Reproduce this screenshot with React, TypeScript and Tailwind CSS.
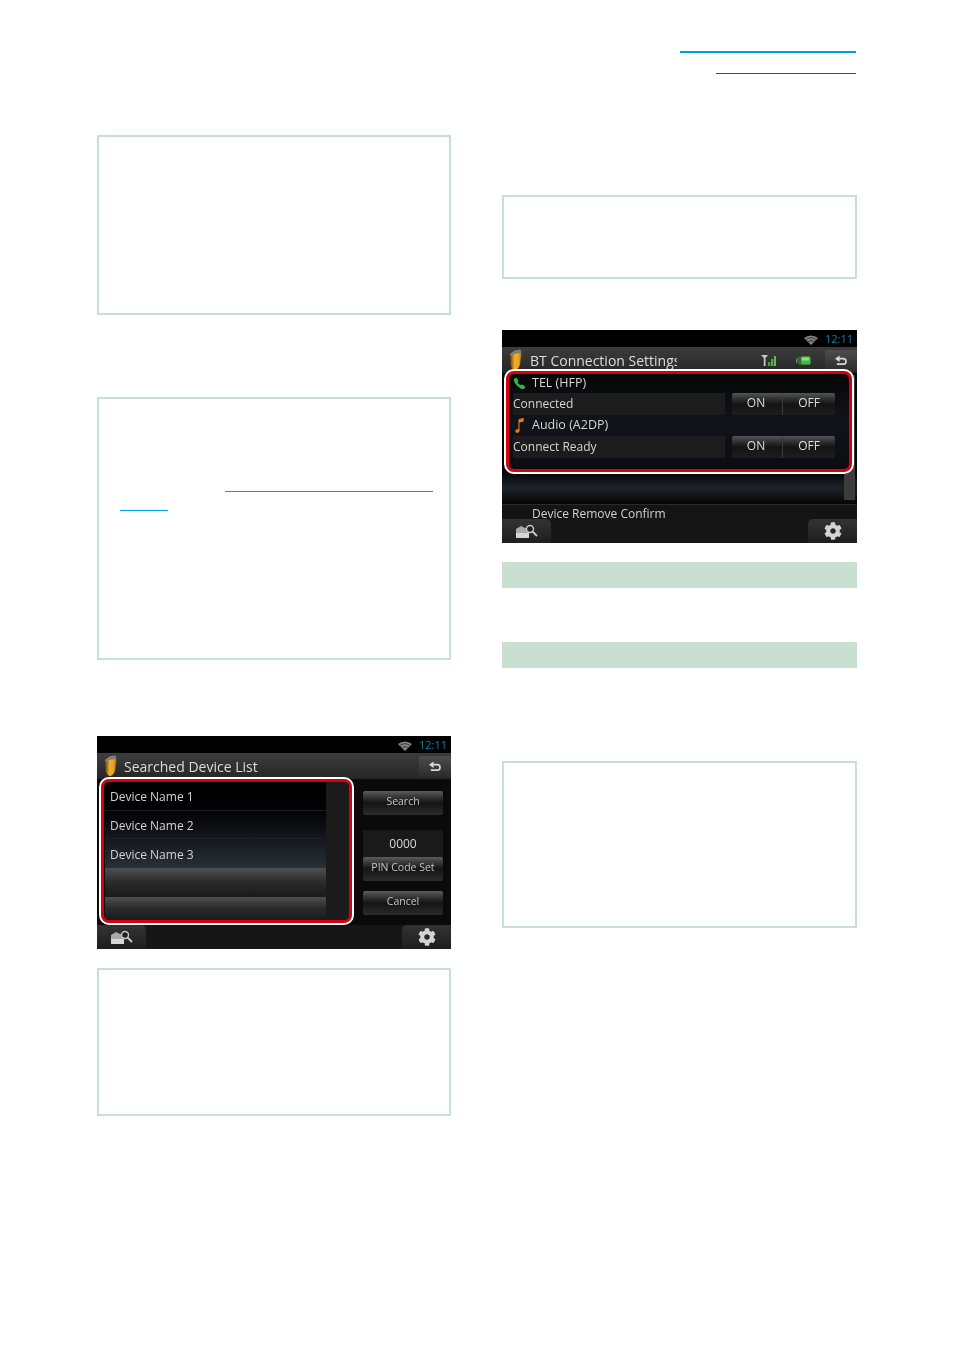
import { ReactNode } from "react";
import { FaCog } from "react-icons/fa";
import { IoCall, IoMusicalNote } from "react-icons/io5";

const screenFont = "font-['Open_Sans','Noto_Sans',sans-serif]";

function Wifi() {
  return (
    <svg width="14" height="10" viewBox="0 0 14 10" className="opacity-80">
      <path d="M0 3 Q7 -2 14 3 L7 10 Z" fill="#a8a8a8" />
      <path d="M2.2 4.4 Q7 1 11.8 4.4" stroke="#222" strokeWidth="0.8" fill="none" />
      <path d="M4.3 6.5 Q7 4.6 9.7 6.5" stroke="#222" strokeWidth="0.8" fill="none" />
    </svg>
  );
}

function Flame({ id }: { id: string }) {
  return (
    <svg width="15" height="22" viewBox="0 0 15 22">
      <defs>
        <linearGradient id={id} x1="0" y1="0" x2="1" y2="0">
          <stop offset="0" stopColor="#5e3f0c" />
          <stop offset="0.4" stopColor="#f0ae26" />
          <stop offset="0.75" stopColor="#e8a322" />
          <stop offset="1" stopColor="#9a6a14" />
        </linearGradient>
      </defs>
      <path d="M2 5 Q8 0 13 1 Q13 3 13.5 5 L12 16 Q10 21 6.5 21 Q3 20 2.5 15 Z" fill={`url(#${id})`} />
      <path d="M2 5 Q8 0 13 1 Q13 3 13 4.5 Q7 3.5 2.5 7 Z" fill="#7d7d7d" />
    </svg>
  );
}

function BackArrow() {
  return (
    <svg width="13" height="11" viewBox="0 0 14 12" fill="none">
      <path d="M5 4 H10 Q13 4 13 7 Q13 10 10 10 H3" stroke="#d8d8d8" strokeWidth="1.8" />
      <path d="M1 4 L6 0.5 V7.5 Z" fill="#d8d8d8" />
    </svg>
  );
}

function FolderSearch() {
  return (
    <svg width="24" height="16" viewBox="0 0 24 16">
      <path d="M1 6 L6 3 L10 5 H14 V15 H1 Z" fill="#a9a9a9" />
      <path d="M1 10 H14 V15 H1 Z" fill="#d6d6d6" />
      <circle cx="15" cy="6" r="3.5" fill="#222" stroke="#c8c8c8" strokeWidth="1.4" />
      <path d="M17.5 8.5 L22 13" stroke="#c8c8c8" strokeWidth="1.8" />
    </svg>
  );
}

function Signal() {
  return (
    <svg width="15" height="12" viewBox="0 0 15 12">
      <path d="M0 1 H7 L4.5 4 V12 H2.8 V4 Z" fill="#c9c9c9" />
      <rect x="7" y="8" width="2.4" height="4" fill="#3f9f3a" />
      <rect x="10" y="5" width="2.4" height="7" fill="#4aaa40" />
      <rect x="13" y="2" width="2" height="10" fill="#5dbb4c" />
    </svg>
  );
}

function Battery() {
  return (
    <svg width="15" height="9" viewBox="0 0 15 9">
      <rect x="0" y="2.5" width="1.5" height="4" fill="#6f8f6a" />
      <rect x="1.5" y="0.5" width="13" height="8" rx="1.5" fill="#2f6b33" />
      <rect x="5" y="0.5" width="9.5" height="8" rx="1.5" fill="#4bb24a" />
      <rect x="6" y="1.5" width="7" height="3" fill="#8fdc86" />
    </svg>
  );
}

function Label({ children, className = "" }: { children: ReactNode; className?: string }) {
  return <span className={`blur-[0.4px] whitespace-nowrap ${className}`}>{children}</span>;
}

function ScreenTop({ title, titleClass, flameId, extras }: { title: string; titleClass: string; flameId: string; extras?: ReactNode }) {
  return (
    <>
      <div className="h-[17px] bg-black flex items-center justify-end gap-[7px] pr-[4px] pt-[2px]">
        <Wifi />
        <Label className="text-[11px] text-[#1d7f9f]">12:11</Label>
      </div>
      <div className="h-[26px] bg-gradient-to-b from-[#3d3d3d] to-[#262626] flex items-center pl-[6px]">
        <Flame id={flameId} />
        <div className={`pt-[1px] overflow-hidden ${titleClass}`}>
          <Label className="text-[14px] text-[#dcdcdc] block">{title}</Label>
        </div>
        <div className="ml-auto flex items-center h-full">
          {extras}
          <div className="w-[32px] h-[21px] self-start mt-[3px] pr-[2px] bg-gradient-to-b from-[#4d4d4d] to-[#2c2c2c] rounded-t-[2px] flex items-center justify-center">
            <BackArrow />
          </div>
        </div>
      </div>
    </>
  );
}

function ScreenBottom() {
  return (
    <div className="h-[24px] bg-[#161616] flex justify-between relative z-10">
      <div className="w-[49px] bg-gradient-to-b from-[#333333] to-[#1e1e1e] rounded-tr-[5px] flex items-center justify-center">
        <FolderSearch />
      </div>
      <div className="w-[49px] bg-gradient-to-b from-[#333333] to-[#1e1e1e] rounded-tl-[5px] flex items-center justify-center">
        <FaCog className="text-[#d4d4d4] text-[18px]" />
      </div>
    </div>
  );
}

function SoftButton({ label, className = "" }: { label: string; className?: string }) {
  return (
    <div className={`w-[80px] h-[24px] pb-[2px] rounded-[2px] bg-gradient-to-b from-[#5c5c5c] via-[#141414] to-[#2c2c2c] flex items-center justify-center ${className}`}>
      <Label className="text-[10.5px] text-[#c4c4c4]">{label}</Label>
    </div>
  );
}

function OnOff() {
  return (
    <div className="w-[103px] h-[22px] rounded-[2px] bg-gradient-to-b from-[#555555] via-[#141414] to-[#1e1e1e] flex text-[12px] text-[#dedede]">
      <div className="w-[51px] pb-[2px] pr-[2px] flex items-center justify-center border-r border-[#3a3a3a]">
        <Label>ON</Label>
      </div>
      <div className="flex-1 pb-[2px] flex items-center justify-center">
        <Label>OFF</Label>
      </div>
    </div>
  );
}

function SearchedScreen() {
  const rows = ["Device Name 1", "Device Name 2", "Device Name 3"];
  return (
    <div className={`${screenFont} w-[354px] h-[213px] bg-[#0a0a0a] flex flex-col overflow-hidden`}>
      <ScreenTop title="Searched Device List" titleClass="ml-[6px] w-[180px]" flameId="flameList" />
      <div className="h-[146px] flex">
        <div className="w-[251px] h-[144px] ml-[4px] rounded-[8px] border-[3px] border-[#d7000f] bg-black outline-2 outline-white flex overflow-hidden">
          <div className="w-[222px] pl-[1px] flex flex-col">
            <div className="h-[86px] bg-gradient-to-b from-black via-[#0b0d11] to-[#2a3038] flex flex-col">
              {rows.map((name) => (
                <div key={name} className="h-[29px] pt-[2px] flex items-center pl-[5px] border-b border-[#1b2027] last:border-b-0">
                  <Label className="text-[12px] text-[#d2d2d2]">{name}</Label>
                </div>
              ))}
            </div>
            <div className="h-[29px] bg-gradient-to-b from-[#505050] via-[#2a2a2a] to-[#1a1a1a]" />
            <div className="flex-1 bg-gradient-to-b from-[#505050] via-[#2a2a2a] to-[#1a1a1a]" />
          </div>
          <div className="flex-1 bg-[#1b1b1b]" />
        </div>
        <div className="flex-1 flex flex-col items-end pr-[8px] pt-[12px]">
          <SoftButton label="Search" />
          <div className="w-[80px] h-[27px] mt-[15px] bg-[#1a1a1a] flex items-center justify-center">
            <Label className="text-[12px] text-[#d8d8d8]">0000</Label>
          </div>
          <SoftButton label="PIN Code Set" />
          <SoftButton label="Cancel" className="mt-[10px]" />
        </div>
      </div>
      <div className="flex-1" />
      <ScreenBottom />
    </div>
  );
}

function ProfileRow({ icon, name, status, height }: { icon: ReactNode; name: string; status: string; height: string }) {
  return (
    <>
      <div className={`${height} flex items-center`}>
        <span className="w-[20px] mr-[3px] flex justify-center">{icon}</span>
        <Label className="text-[12.5px] text-[#d4d4d4]">{name}</Label>
      </div>
      <div className="h-[22px] flex items-center">
        <div className="w-[212px] h-full bg-[#1c1c1c] ml-[4px] flex items-center">
          <Label className="text-[12px] text-[#d4d4d4]">{status}</Label>
        </div>
        <div className="ml-[7px]">
          <OnOff />
        </div>
      </div>
    </>
  );
}

function ConnectionScreen() {
  return (
    <div className={`${screenFont} w-[355px] h-[213px] bg-[#060606] flex flex-col overflow-hidden relative`}>
      <ScreenTop
        title="BT Connection Settings"
        titleClass="ml-[7px] w-[147px]"
        flameId="flameBt"
        extras={
          <div className="flex items-center mr-[14px]">
            <Signal />
            <div className="ml-[20px]">
              <Battery />
            </div>
          </div>
        }
      />
      <div className="absolute left-[342px] top-[45px] w-[11px] h-[125px] bg-[#3c3c3c]" />
      <div className="flex-1 flex flex-col">
        <div className="relative w-[346px] h-[101px] -mt-[2px] ml-[4px] rounded-[8px] border-[3px] border-[#d7000f] outline-2 outline-white bg-gradient-to-b from-[#070707] via-[#11141b] to-[#0a0c10]">
          <ProfileRow height="h-[19px]" icon={<IoCall className="text-[#2fb84d] text-[13px]" />} name="TEL (HFP)" status="Connected" />
          <ProfileRow height="h-[21px]" icon={<IoMusicalNote className="text-[#e07a1e] text-[17px]" />} name="Audio (A2DP)" status="Connect Ready" />
        </div>
        <div className="h-[32px] bg-gradient-to-b from-[#060606] via-[#1d2229] to-[#060606]" />
        <div className="h-[15px] pt-[2px] bg-[#141414] border-t border-[#2a2a2a] flex">
          <Label className="text-[12px] leading-[13px] text-[#d2d2d2] ml-[30px]">Device Remove Confirm</Label>
        </div>
      </div>
      <ScreenBottom />
    </div>
  );
}

function NoteBox({ height, children }: { height: string; children?: ReactNode }) {
  return <div className={`${height} border-2 border-[#c6e0d3] bg-white`}>{children}</div>;
}

export default function App() {
  return (
    <div className="min-h-[1352px] bg-white">
      <div className="pt-[51px] pr-[97px] flex flex-col items-end">
        <div className="w-[176px] h-[2px] bg-[#00a0e9]" />
        <div className="w-[140px] h-[1px] mt-[20px] bg-[#c8161d]" />
      </div>
      <div className="flex pl-[97px] gap-[51px]">
        <div className="w-[354px] pt-[61px] flex flex-col">
          <NoteBox height="h-[180px]" />
          <div className="mt-[82px]">
            <NoteBox height="h-[263px]">
              <div className="h-[1px] w-[208px] ml-[126px] mt-[92px] bg-[#00a0e9]" />
              <div className="h-[1px] w-[48px] ml-[21px] mt-[18px] bg-[#00a0e9]" />
            </NoteBox>
          </div>
          <div className="mt-[76px]">
            <SearchedScreen />
          </div>
          <div className="mt-[19px]">
            <NoteBox height="h-[148px]" />
          </div>
        </div>
        <div className="w-[355px] pt-[121px] flex flex-col">
          <NoteBox height="h-[84px]" />
          <div className="mt-[51px]">
            <ConnectionScreen />
          </div>
          <div className="h-[26px] mt-[19px] bg-[#c9dfd2]" />
          <div className="h-[26px] mt-[54px] bg-[#c9dfd2]" />
          <div className="mt-[93px]">
            <NoteBox height="h-[167px]" />
          </div>
        </div>
      </div>
    </div>
  );
}
